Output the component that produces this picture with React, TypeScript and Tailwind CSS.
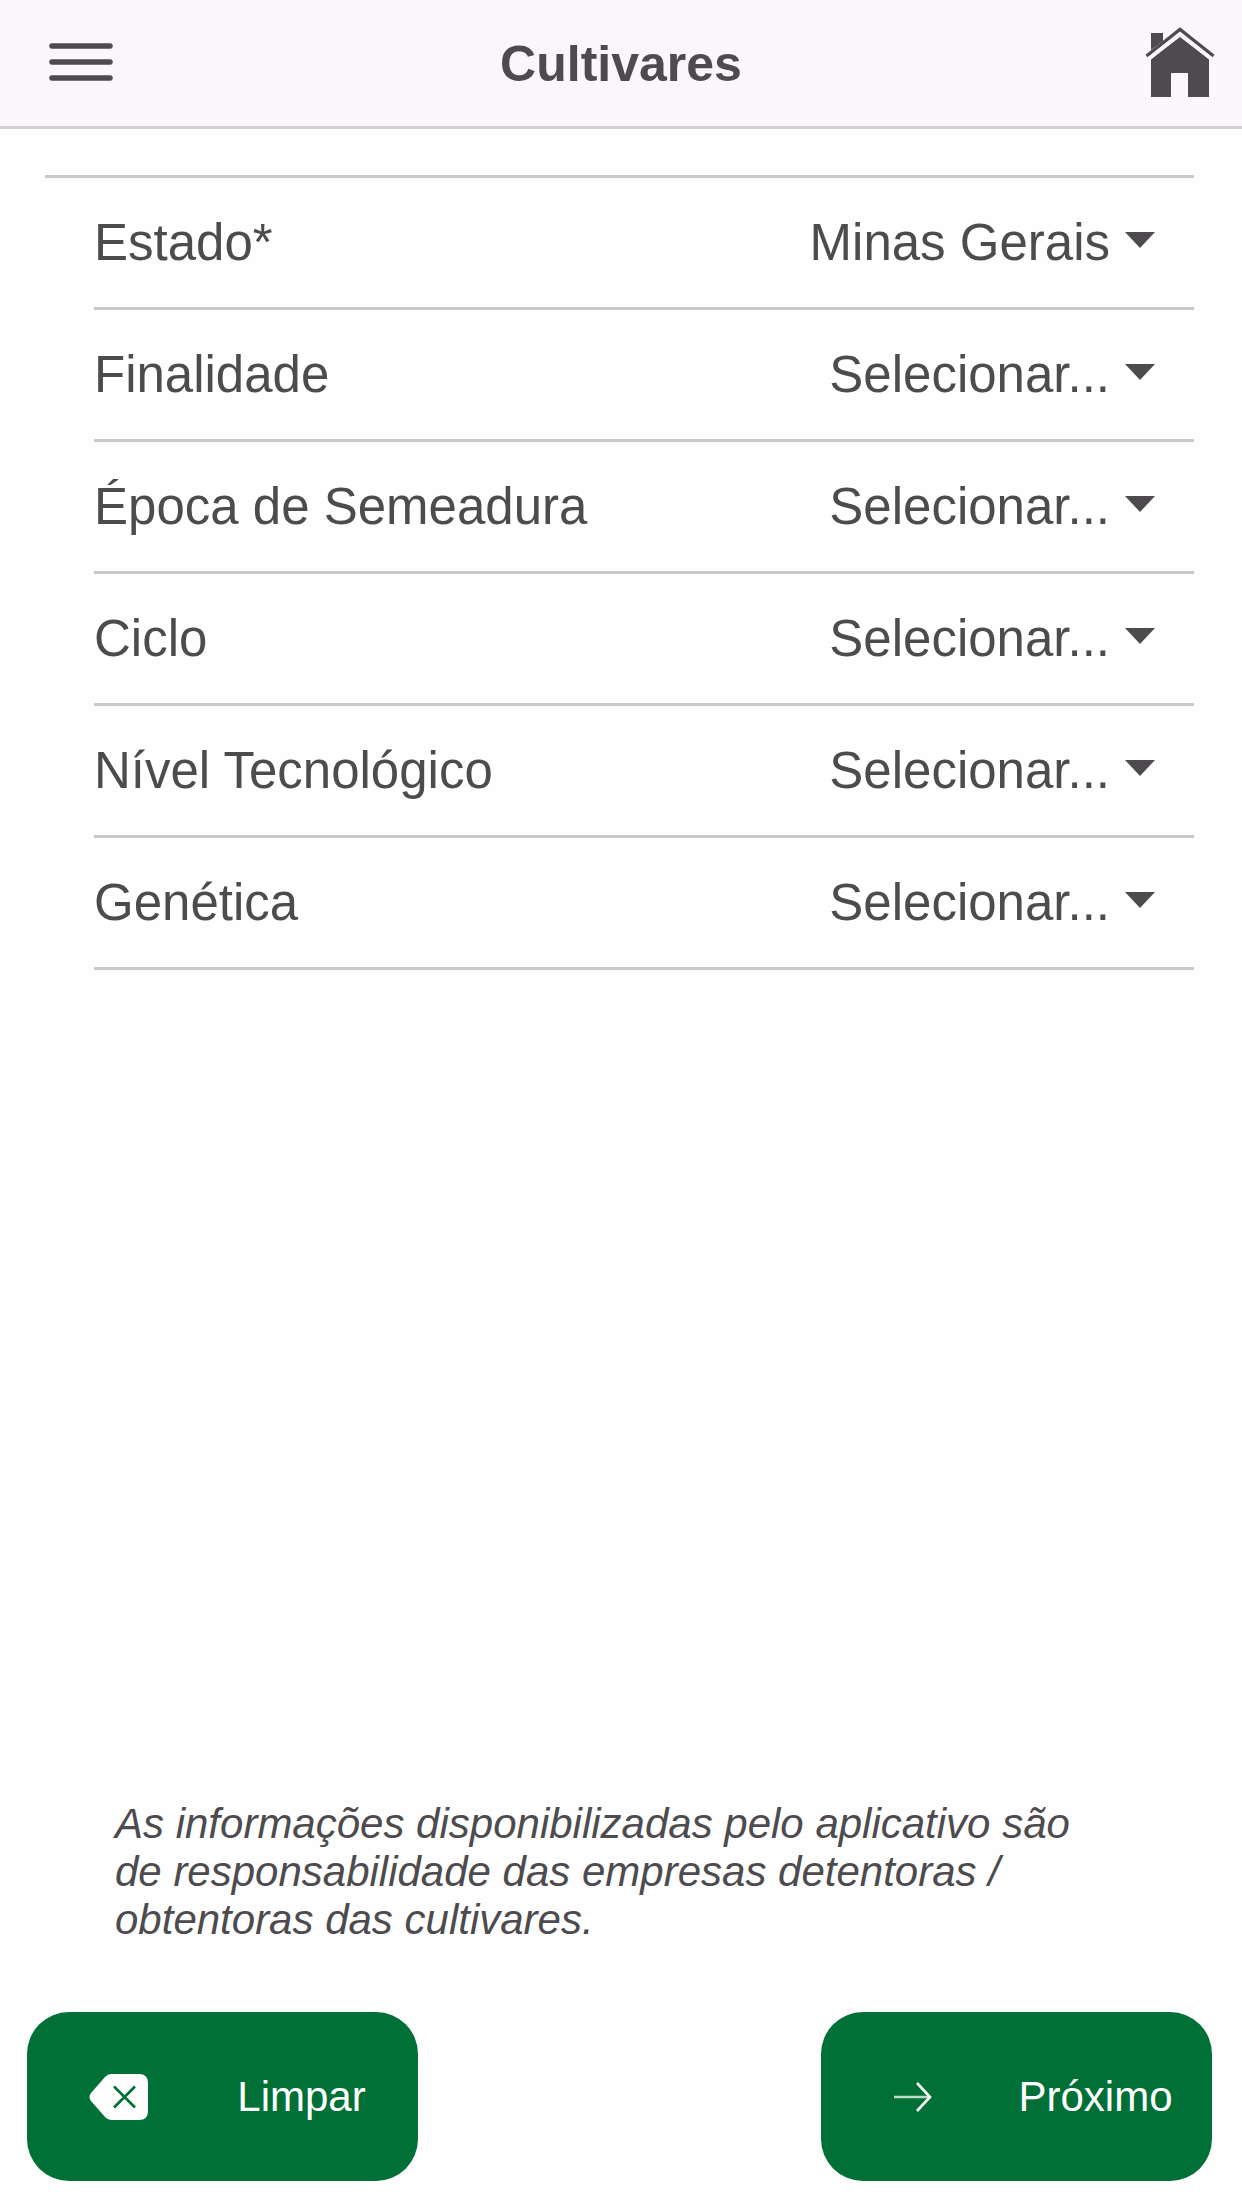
import { useState } from "react";

type Field = {
    id: string;
    label: string;
    options: string[];
};

const fields: Field[] = [
    { id: "estado", label: "Estado*", options: ["Minas Gerais"] },
    { id: "finalidade", label: "Finalidade", options: ["Selecionar..."] },
    { id: "epoca", label: "Época de Semeadura", options: ["Selecionar..."] },
    { id: "ciclo", label: "Ciclo", options: ["Selecionar..."] },
    { id: "nivel", label: "Nível Tecnológico", options: ["Selecionar..."] },
    { id: "genetica", label: "Genética", options: ["Selecionar..."] },
];

const MenuIcon = () => (
    <svg className="w-16 h-10" viewBox="0 0 64 40" stroke="currentColor" strokeWidth="5.5" strokeLinecap="round" aria-hidden="true">
        <path d="M3 4h58M3 20h58M3 36h58" />
    </svg>
);

const HomeIcon = () => (
    <svg className="w-[70px] h-[70px]" viewBox="0 0 70 70" fill="none" aria-hidden="true">
        <path d="M6 6h12v8L6 23z" fill="currentColor" />
        <path d="M35 10L64 32v38H43V46H26v24H6V32z" fill="currentColor" />
        <path d="M1.5 29L35 2.5L68.5 29" stroke="currentColor" strokeWidth="3.4" />
        <path d="M3 32.5L35 7L67 32.5" stroke="#f9f7fb" strokeWidth="3.6" />
    </svg>
);

const ClearIcon = () => (
    <svg className="w-[60px] h-12" viewBox="0 0 60 48" aria-hidden="true">
        <path d="M22 1h28q9 0 9 9v28q0 9-9 9H22q-3 0-6-3L2 28q-3-4 0-8L16 4q3-3 6-3z" fill="currentColor" />
        <path d="M25 13.5l21 21M46 13.5l-21 21" stroke="#007036" strokeWidth="2.6" />
    </svg>
);

const NextIcon = () => (
    <svg className="w-[38px] h-[30px]" viewBox="0 0 38 30" fill="none" stroke="currentColor" strokeWidth="2.6" aria-hidden="true">
        <path d="M0 15h36" opacity="0.75" />
        <path d="M23 1l13 14-13 14" />
    </svg>
);

const SelectRow = ({ id, label, options }: Field) => {
    const [value, setValue] = useState(options[0]);

    return (
        <div className="relative flex items-center h-[132px] ml-[49px] border-b-3 border-[#c9c7cb]">
            <label htmlFor={id} className="shrink-0">{label}</label>
            <select
                id={id}
                value={value}
                onChange={(e) => setValue(e.target.value)}
                className="flex-1 min-w-0 h-full pr-[84px] appearance-none bg-transparent outline-none [text-align-last:right]"
            >
                {options.map((option) => (
                    <option key={option}>{option}</option>
                ))}
            </select>
            <svg className="absolute right-[39px] top-[54px] w-[30px] h-4 pointer-events-none" viewBox="0 0 30 16" fill="currentColor" aria-hidden="true">
                <path d="M0 0h30L15 16z" />
            </svg>
        </div>
    );
};

type ButtonProps = {
    text: string;
    icon: React.ReactNode;
};

const ActionButton = ({ text, icon }: ButtonProps) => (
    <button type="button" className="flex items-center w-[391px] h-[169px] pl-[26px] rounded-[42px] bg-[#007036] text-white text-[42px] leading-[48px] cursor-pointer">
        <span className="flex justify-center w-[132px]">{icon}</span>
        <span className="flex-1 text-center">{text}</span>
    </button>
);

export default function App() {
    return (
        <div className="flex flex-col min-h-screen bg-[#fefefe] font-['Liberation_Sans',Arial,sans-serif] text-[51px] leading-[60px] text-[#4d4b4e]">
            <header className="grid grid-cols-[1fr_auto_1fr] items-center h-[129px] px-[27px] pb-0.5 border-b-3 border-[#d3d1d6] bg-[#f9f7fb]">
                <button type="button" aria-label="Menu" className="justify-self-start px-[22px] cursor-pointer">
                    <MenuIcon />
                </button>
                <h1 className="pt-1 font-bold text-[50px]">Cultivares</h1>
                <a href="#" aria-label="Início" className="justify-self-end">
                    <HomeIcon />
                </a>
            </header>

            <form className="flex flex-col flex-1">
                <div className="mt-[46px] ml-[45px] mr-12 border-t-3 border-[#c9c7cb]">
                    {fields.map((field) => (
                        <SelectRow key={field.id} {...field} />
                    ))}
                </div>

                <p className="mt-auto pl-[115px] pr-[130px] italic text-[42px] leading-[48px]">
                    As informações disponibilizadas pelo aplicativo são de responsabilidade das empresas detentoras / obtentoras das cultivares.
                </p>

                <div className="flex justify-between mt-[68px] mb-[27px] pl-[27px] pr-[30px]">
                    <ActionButton text="Limpar" icon={<ClearIcon />} />
                    <ActionButton text="Próximo" icon={<NextIcon />} />
                </div>
            </form>
        </div>
    );
}
